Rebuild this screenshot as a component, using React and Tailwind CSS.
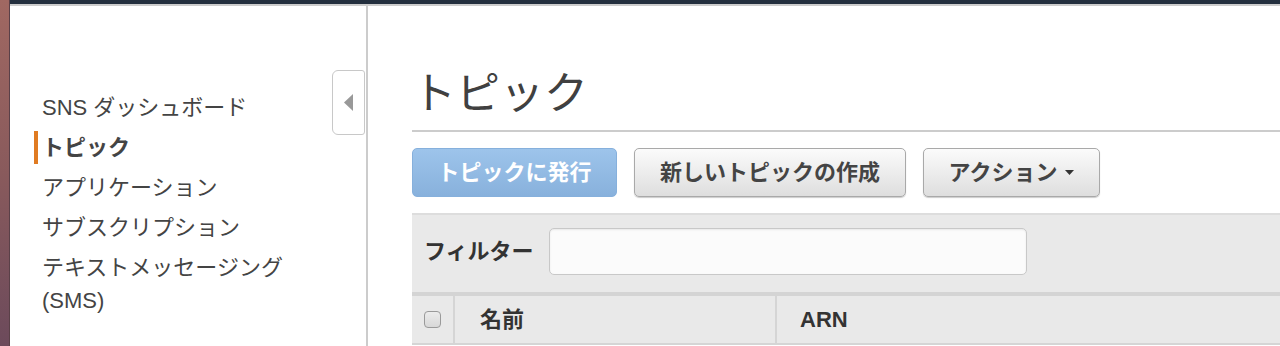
import { useState } from 'react';

const navItems = [
    { label: 'SNS ダッシュボード' },
    { label: 'トピック', active: true },
    { label: 'アプリケーション' },
    { label: 'サブスクリプション' },
    { label: 'テキストメッセージング (SMS)' },
];

const font = "font-['Liberation_Sans','Noto_Sans_CJK_JP',sans-serif]";

export default function App() {
    const [filter, setFilter] = useState('');

    return (
        <div className={`flex h-[346px] w-[1280px] overflow-hidden bg-white ${font}`}>
            {/* desktop edge */}
            <div className="w-[10px] shrink-0 bg-gradient-to-b from-[#a06862] via-[#895a5c] to-[#6c4a5b] border-r border-[#5a4048]" />

            <div className="flex flex-1 flex-col min-w-0">
                {/* top bar */}
                <div className="h-[4px] bg-[#232f3e]" />
                <div className="h-[2px] bg-[#cccccc]" />

                <div className="flex flex-1 min-h-0">
                    {/* Sidebar */}
                    <aside className="relative w-[358px] shrink-0 border-r-2 border-[#cccccc]">
                        <nav className="pt-[85px] pl-[24px] w-[296px] flex flex-col gap-[7px]">
                            {navItems.map((item) => (
                                <div
                                    key={item.label}
                                    className={`border-l-4 pl-[4px] text-[22px] leading-[33px] text-[#444] ${item.active
                                        ? 'border-[#e07b22] font-bold'
                                        : 'border-transparent'
                                        }`}
                                >
                                    {item.label}
                                </div>
                            ))}
                        </nav>

                        {/* collapse tab */}
                        <button className="absolute left-[322px] top-[64px] w-[33px] h-[65px] rounded-l-[6px] rounded-r-[3px] border border-[#c8c8c8] bg-white flex items-center justify-center">
                            <svg width="9" height="17" viewBox="0 0 9 17">
                                <path d="M9 0 L0 8.5 L9 17 Z" fill="#999" />
                            </svg>
                        </button>
                    </aside>

                    {/* Main */}
                    <main className="flex-1 min-w-0 pl-[44px]">
                        <h1 className="mt-[62px] pb-[10px] border-b-2 border-[#cccccc] text-[44px] leading-[52px] font-normal text-[#404040]">
                            トピック
                        </h1>

                        <div className="flex gap-[17px] mt-[16px]">
                            <button className="w-[205px] h-[49px] rounded-[5px] border border-[#86b0dc] bg-gradient-to-b from-[#9dc4eb] to-[#88b1dc] text-white text-[22px] font-bold">
                                トピックに発行
                            </button>
                            <button className="w-[272px] h-[49px] rounded-[5px] border border-[#a9a9a9] bg-gradient-to-b from-[#fbfbfb] to-[#dedede] shadow-[0_1px_1px_rgba(0,0,0,0.2)] text-[#444] text-[22px] font-bold">
                                新しいトピックの作成
                            </button>
                            <button className="w-[177px] h-[49px] rounded-[5px] border border-[#a9a9a9] bg-gradient-to-b from-[#fbfbfb] to-[#dedede] shadow-[0_1px_1px_rgba(0,0,0,0.2)] text-[#444] text-[22px] font-bold flex items-center justify-center gap-[8px]">
                                アクション
                                <svg width="9" height="5" viewBox="0 0 9 5">
                                    <path d="M0 0 L9 0 L4.5 5 Z" fill="#333" />
                                </svg>
                            </button>
                        </div>

                        {/* Filter + table */}
                        <div className="mt-[16px] border-t-2 border-[#dddddd] bg-[#e9e9e9]">
                            <div className="flex items-center pl-[12px] pt-[13px] pb-[17px] border-b-4 border-[#d4d4d4]">
                                <span className="text-[22px] font-bold text-[#333] mr-[15px]">フィルター</span>
                                <input
                                    value={filter}
                                    onChange={(e) => setFilter(e.target.value)}
                                    className="w-[478px] h-[47px] rounded-[5px] border border-[#c8c8c8] bg-[#fbfbfb] shadow-[inset_0_1px_2px_rgba(0,0,0,0.08)] outline-none px-2"
                                />
                            </div>
                            <div className="flex h-[49px] border-b-2 border-[#d5d5d5] text-[22px] font-bold text-[#333]">
                                <div className="w-[43px] border-r-2 border-[#d5d5d5] flex items-center justify-center">
                                    <span className="w-[17px] h-[17px] rounded-[4px] border border-[#9a9a9a] bg-gradient-to-b from-[#ececec] to-[#d8d8d8]" />
                                </div>
                                <div className="w-[322px] border-r-2 border-[#d5d5d5] flex items-center pl-[25px]">
                                    名前
                                </div>
                                <div className="flex-1 flex items-center pl-[23px]">ARN</div>
                            </div>
                        </div>
                    </main>
                </div>
            </div>
        </div>
    );
}
